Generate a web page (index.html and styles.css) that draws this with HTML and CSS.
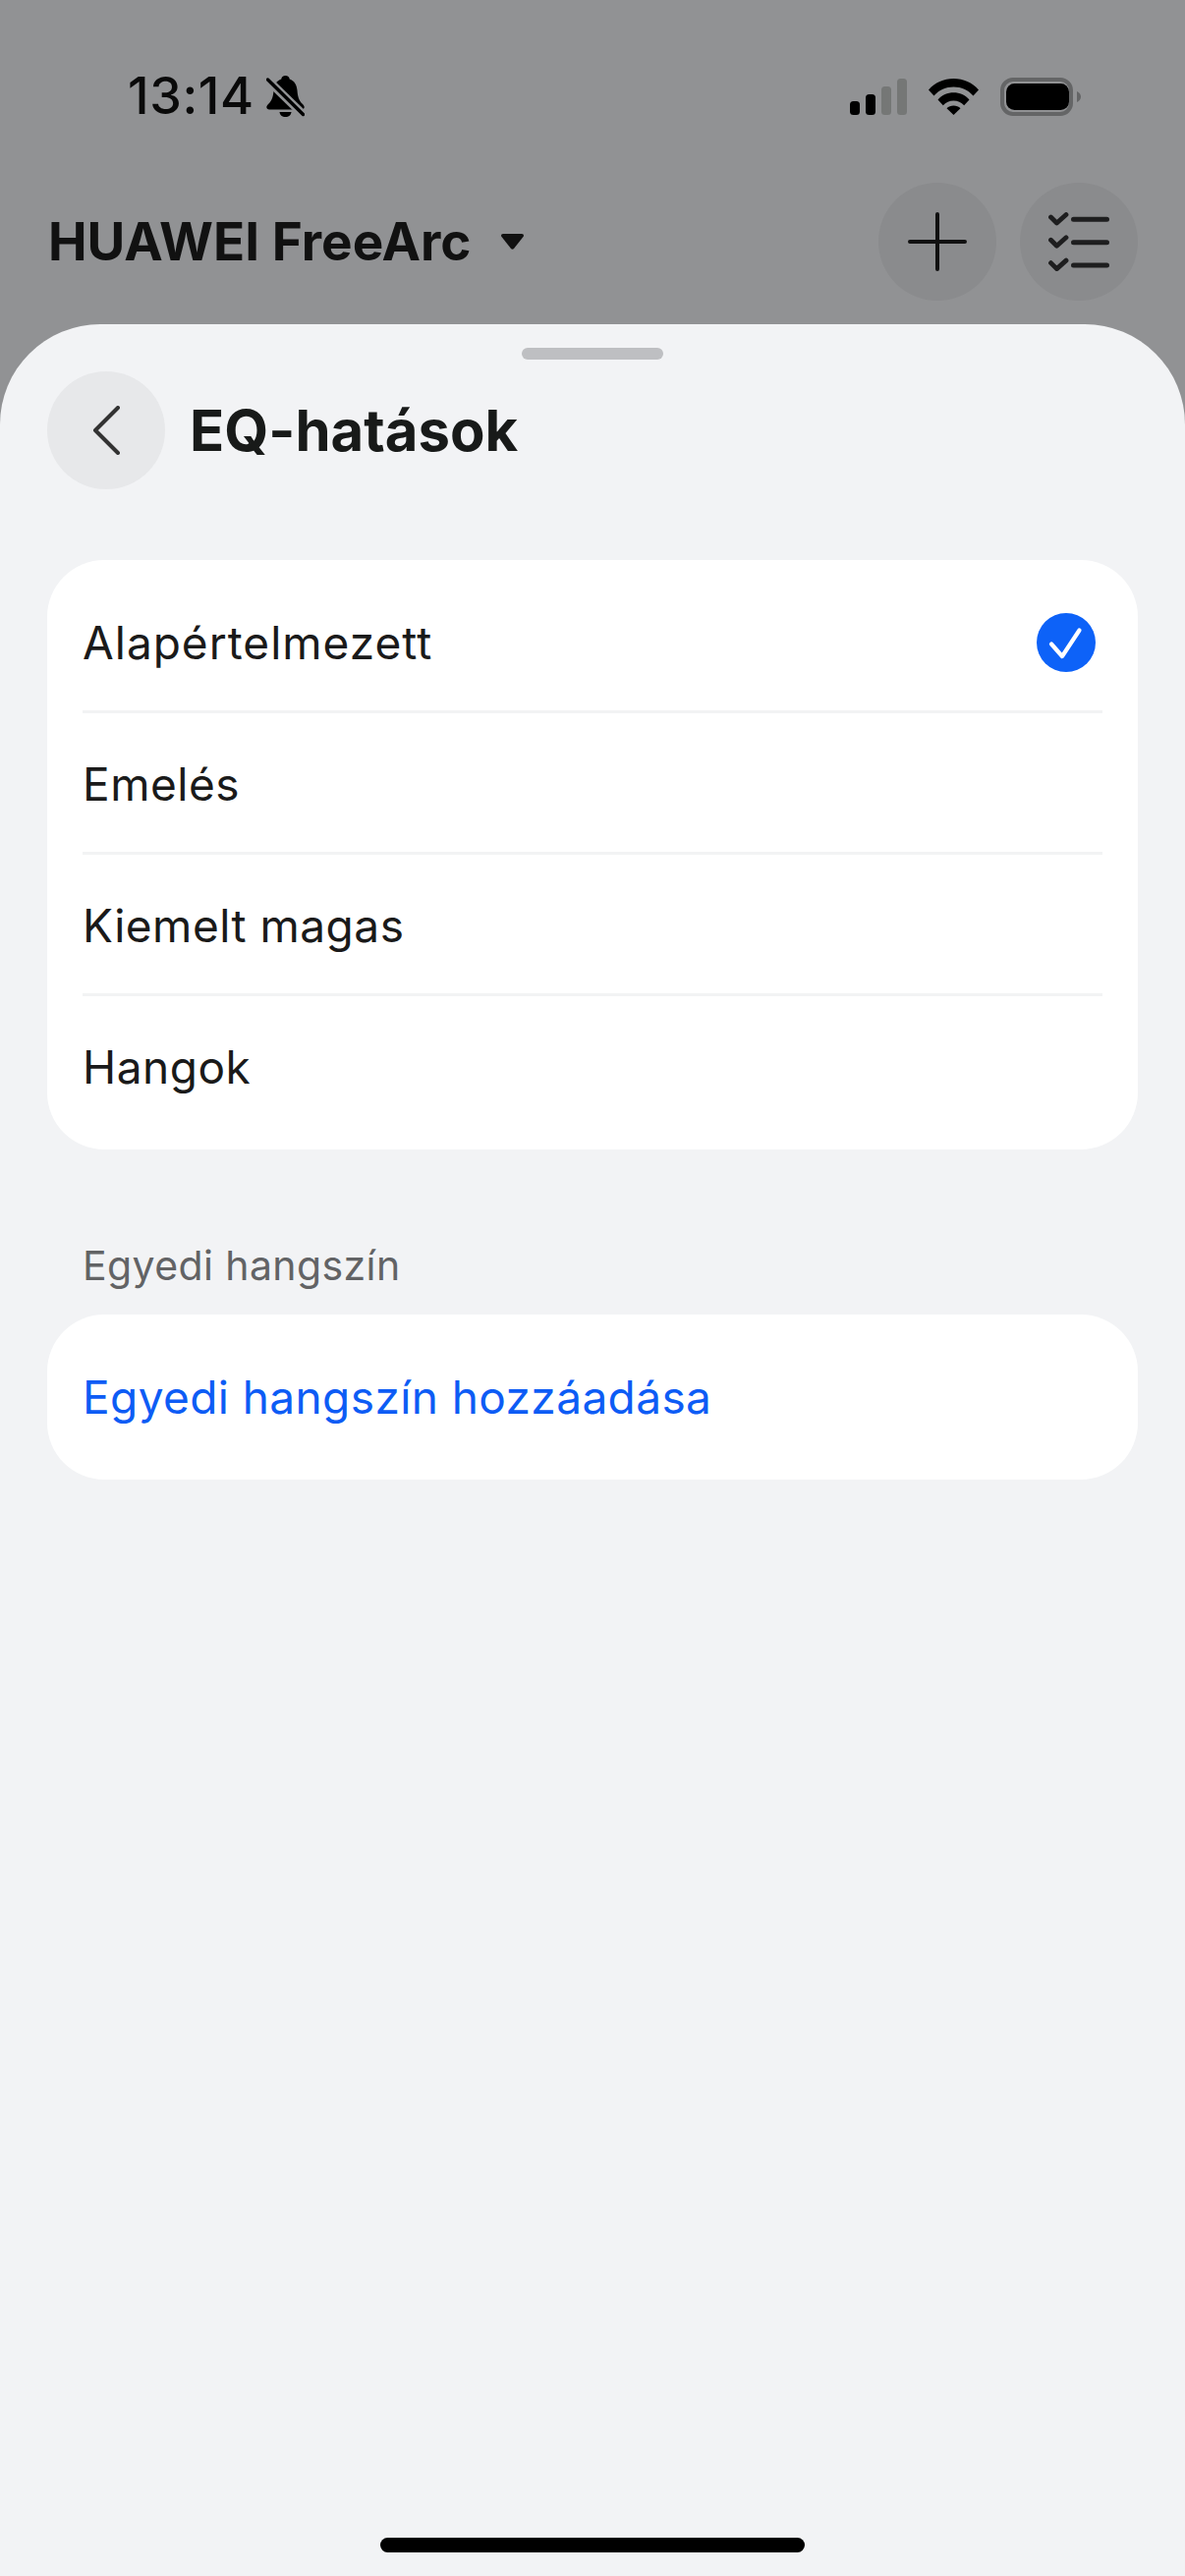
FILE: index.html
```html
<!DOCTYPE html>
<html lang="hu">
  <head>
    <meta charset="utf-8" />
    <title>EQ-hatások</title>
    <link rel="stylesheet" href="styles.css">
  </head>
  <body>
    <div class="status-bar">
      <div class="status-left">
        <span class="time">13:14</span>
        <svg class="bell" width="39" height="42" viewBox="0 0 39 42">
          <path d="M19.500 0C22 0 23.500 1.500 23.700 3.500 28.500 5 31 9.500 31.500 15 32 21 33 25 36.500 28.500 38 30 38.700 31 38.700 32 38.700 33.500 37.500 34.500 36 34.500H3C1.500 34.500.3 33.500.3 32 .3 31 1 30 2.500 28.500 6 25 7 21 7.500 15 8 9.500 10.500 5 15.300 3.500 15.500 1.500 17 0 19.500 0z" fill="#000"/>
          <path d="M13.500 37H25.500C25.300 40 22.800 42 19.500 42S13.700 40 13.500 37z" fill="#000"/>
          <path d="M0 3 39 41" stroke="#919294" stroke-width="8.500"/>
          <path d="M1.500 4 37.500 39.500" stroke="#000" stroke-width="3.400" stroke-linecap="round"/>
        </svg>
      </div>
      <div class="status-right">
        <svg width="58" height="37" viewBox="0 0 58 37">
          <rect x="0" y="23" width="10" height="14" rx="3.500" fill="#000"/>
          <rect x="16" y="16" width="10" height="21" rx="3.500" fill="#000"/>
          <rect x="32" y="8" width="10" height="29" rx="3.500" fill="#757776"/>
          <rect x="48" y="0" width="10" height="37" rx="3.500" fill="#757776"/>
        </svg>
        <svg width="51" height="37" viewBox="0 0 51 37">
          <path d="M0 11.500C6.500 4 15.500 0 25.500 0S44.500 4 51 11.500l-5.500 6C40.300 11.500 33.300 8.500 25.500 8.500S10.700 11.500 5.500 17.500z" fill="#000"/>
          <path d="M9.500 21.500C13.700 16.800 19.300 14.300 25.500 14.300S37.300 16.800 41.500 21.500l-5.300 5.700C33.400 24 29.700 22.400 25.500 22.400S17.600 24 14.800 27.200z" fill="#000"/>
          <path d="M18.500 30.200C20.400 28.300 22.800 27.400 25.500 27.400S30.600 28.300 32.500 30.200L25.500 37z" fill="#000"/>
        </svg>
        <svg width="82" height="39" viewBox="0 0 82 39">
          <rect x="2" y="2" width="70" height="35" rx="11" fill="none" stroke="#646566" stroke-width="4"/>
          <rect x="6" y="6" width="64" height="27" rx="8.500" fill="#000"/>
          <path d="M78 14c2.500 1 4 3 4 5.500s-1.500 4.500-4 5.500z" fill="#646566"/>
        </svg>
      </div>
    </div>

    <div class="top-bar">
      <div class="device">
        <span class="device-name">HUAWEI FreeArc</span>
        <svg class="caret" width="23" height="16" viewBox="0 0 23 16">
          <path d="M2 0h19c1.800 0 2.500 1.700 1.500 3L13 15c-.8 1-2.200 1-3 0L.5 3C-.5 1.700.2 0 2 0z" fill="#111"/>
        </svg>
      </div>
      <div class="top-actions">
        <div class="round-btn">
          <svg width="60" height="60" viewBox="0 0 60 60">
            <path d="M30 2v56M2 30h56" stroke="#111" stroke-width="4" stroke-linecap="round"/>
          </svg>
        </div>
        <div class="round-btn">
          <svg width="62" height="60" viewBox="0 0 62 60">
            <path d="M2.500 5l6 6L18 2.500M2.500 28.300l6 6 9.500-8.500M2.500 51.600l6 6 9.500-8.500" fill="none" stroke="#1e1e1f" stroke-width="4.800" stroke-linecap="round" stroke-linejoin="round"/>
            <path d="M25.500 7.300h34M25.500 30.700h34M25.500 54h34" stroke="#1e1e1f" stroke-width="5" stroke-linecap="round"/>
          </svg>
        </div>
      </div>
    </div>

    <div class="sheet">
      <div class="handle"></div>
      <div class="sheet-header">
        <div class="back-btn">
          <svg width="30" height="50" viewBox="0 0 30 50">
            <path d="M27 2 4 25l23 23" fill="none" stroke="#333" stroke-width="4" stroke-linecap="round" stroke-linejoin="round"/>
          </svg>
        </div>
        <h1 class="sheet-title">EQ-hatások</h1>
      </div>

      <ul class="card">
        <li class="row">
          <span class="row-wide">Alapértelmezett</span>
          <svg class="check" width="60" height="60" viewBox="0 0 60 60">
            <circle cx="30" cy="30" r="30" fill="#0d62f8"/>
            <path d="M15 31.500 26 44 43.500 17.500" fill="none" stroke="#fff" stroke-width="4.200" stroke-linecap="round" stroke-linejoin="round"/>
          </svg>
        </li>
        <li class="row"><span>Emelés</span></li>
        <li class="row"><span>Kiemelt magas</span></li>
        <li class="row"><span>Hangok</span></li>
      </ul>

      <div class="section-label">Egyedi hangszín</div>
      <div class="add-card">Egyedi hangszín hozzáadása</div>

      <div class="home-indicator"></div>
    </div>
  </body>
</html>
```

FILE: styles.css
```css
* {
  box-sizing: border-box;
}

body {
  margin: 0;
  height: 2622px;
  display: flex;
  flex-direction: column;
  background-color: #919294;
  font-family: Inter, "Noto Sans", sans-serif;
  color: #1a1a1a;
  overflow: hidden;
}

.status-bar {
  height: 186px;
  padding: 77px 106px 0 130px;
  display: flex;
  justify-content: space-between;
  align-items: flex-start;
}

.status-left {
  display: flex;
  align-items: center;
  height: 42px;
  gap: 12px;
}

.time {
  font-size: 52px;
  line-height: 42px;
  font-weight: 500;
  letter-spacing: 0.6px;
  color: #0a0a0a;
}

.status-right {
  display: flex;
  align-items: center;
  height: 42px;
  gap: 22px;
}

.top-bar {
  height: 120px;
  margin-bottom: 24px;
  padding: 0 48px 0 49px;
  display: flex;
  justify-content: space-between;
  align-items: center;
}

.device {
  display: flex;
  align-items: center;
  gap: 30px;
}

.device-name {
  font-size: 53px;
  font-weight: 650;
  color: #111;
}

.top-actions {
  display: flex;
  gap: 24px;
}

.round-btn {
  width: 120px;
  height: 120px;
  border-radius: 50%;
  background-color: #8a8b8d;
  display: flex;
  align-items: center;
  justify-content: center;
}

.sheet {
  flex: 1;
  padding: 24px 48px 24px;
  display: flex;
  flex-direction: column;
  background-color: #f2f3f5;
  border-radius: 102px 102px 0 0;
}

.handle {
  width: 144px;
  height: 12px;
  margin: 0 auto 12px;
  border-radius: 6px;
  background-color: #bebfc2;
}

.sheet-header {
  display: flex;
  align-items: center;
  gap: 25px;
  margin-bottom: 72px;
}

.back-btn {
  width: 120px;
  height: 120px;
  border-radius: 50%;
  background-color: #e7e8ea;
  display: flex;
  align-items: center;
  justify-content: center;
}

.sheet-title {
  margin: 0;
  font-size: 58px;
  font-weight: 700;
  color: #181a19;
}

.card {
  list-style: none;
  margin: 0;
  padding: 12px 36px;
  background-color: #fff;
  border-radius: 58px;
}

.row {
  height: 144px;
  padding: 3px 7px 0 0;
  display: flex;
  justify-content: space-between;
  align-items: center;
  font-size: 46px;
  font-weight: 440;
  letter-spacing: 0.5px;
  border-bottom: 3px solid #f2f3f4;
}

.row:last-child {
  border-bottom-color: transparent;
}

.row-wide {
  letter-spacing: 1px;
}

.section-label {
  margin: 94px 0 26px;
  padding-left: 36px;
  font-size: 41px;
  line-height: 48px;
  font-weight: 440;
  letter-spacing: 0.4px;
  color: #626365;
}

.add-card {
  height: 168px;
  padding-left: 36px;
  display: flex;
  align-items: center;
  background-color: #fff;
  border-radius: 58px;
  font-size: 46px;
  font-weight: 440;
  letter-spacing: 0.4px;
  color: #0d5cf5;
}

.home-indicator {
  width: 432px;
  height: 15px;
  margin: auto auto 0;
  border-radius: 8px;
  background-color: #000;
}
```
